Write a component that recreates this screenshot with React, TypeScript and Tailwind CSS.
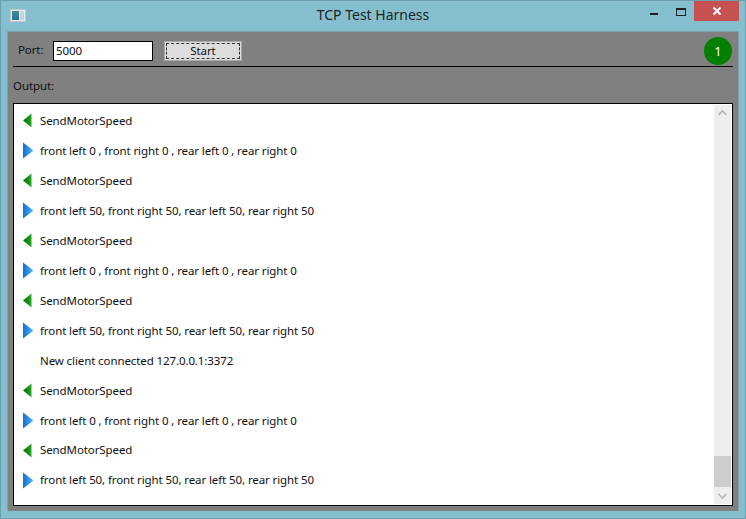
import React from "react";

function LeftArrow() {
  return (
    <svg width="10" height="15" viewBox="0 0 10 15" className="shrink-0">
      <defs>
        <linearGradient id="gl" x1="0" y1="0" x2="1" y2="0">
          <stop offset="0" stopColor="#0a6f0a" />
          <stop offset="0.6" stopColor="#0f8f0f" />
          <stop offset="1" stopColor="#2ba82b" />
        </linearGradient>
      </defs>
      <path d="M8.5 0.5 L8.5 14.5 L0 7.5 Z" fill="url(#gl)" />
    </svg>
  );
}

function RightArrow() {
  return (
    <svg width="11" height="17" viewBox="0 0 11 17" className="shrink-0">
      <defs>
        <linearGradient id="gr" x1="0" y1="0" x2="1" y2="0">
          <stop offset="0" stopColor="#1a6fd0" />
          <stop offset="0.6" stopColor="#2f9bee" />
          <stop offset="1" stopColor="#6cc0f5" />
        </linearGradient>
      </defs>
      <path d="M0 0.5 L10.5 8.5 L0 16.5 Z" fill="url(#gr)" />
    </svg>
  );
}

type Kind = "in" | "out" | "none";
const rows: [Kind, string, string][] = [
  ["in", "SendMotorSpeed", "h-[30px]"],
  ["out", "front left 0 , front right 0 , rear left 0 , rear right 0", "h-[30px]"],
  ["in", "SendMotorSpeed", "h-[30px]"],
  ["out", "front left 50, front right 50, rear left 50, rear right 50", "h-[30px]"],
  ["in", "SendMotorSpeed", "h-[30px]"],
  ["out", "front left 0 , front right 0 , rear left 0 , rear right 0", "h-[30px]"],
  ["in", "SendMotorSpeed", "h-[30px]"],
  ["out", "front left 50, front right 50, rear left 50, rear right 50", "h-[30px]"],
  ["none", "New client connected 127.0.0.1:3372", "h-[30px]"],
  ["in", "SendMotorSpeed", "h-[30px]"],
  ["out", "front left 0 , front right 0 , rear left 0 , rear right 0", "h-[29.5px]"],
  ["in", "SendMotorSpeed", "h-[30px]"],
  ["out", "front left 50, front right 50, rear left 50, rear right 50", "h-[30px]"],
];

export default function App() {
  return (
    <div className="w-[746px] h-[519px] flex flex-col bg-[#85bfcf] border border-[#6d9fae] overflow-hidden text-[11.5px] tracking-[-0.1px] text-[#111] font-['Noto_Sans','Open_Sans',sans-serif]">
      <div className="h-[30px] shrink-0 flex items-start relative">
        <div className="ml-[9px] mt-[8px] w-[16px] h-[13px] bg-[#e8eef0] border border-[#b9c7cc] flex p-[1px] gap-[1px]">
          <div className="w-[7px] bg-gradient-to-b from-[#3d8f8f] to-[#2f6f9f]" />
          <div className="w-[4px] bg-[#c4d4da]" />
        </div>
        <div className="absolute left-0 right-0 top-[4px] text-center text-[14px] tracking-normal leading-[20px] text-[#222]">
          TCP Test Harness
        </div>
        <div className="ml-auto flex items-start">
          <div className="w-[8px] h-[2px] bg-[#222] mt-[12px] mr-[18px]" />
          <div className="w-[10px] h-[8px] border border-[#222] border-t-2 mt-[7px] mr-[8px]" />
          <div className="w-[45px] h-[20px] bg-[#c75050] flex items-center justify-center mr-[6px]">
            <svg width="10" height="10" viewBox="0 0 10 10">
              <path d="M1.5 1.5 L8.5 8.5 M8.5 1.5 L1.5 8.5" stroke="#fff" strokeWidth="2" />
            </svg>
          </div>
        </div>
      </div>
      <div className="mx-[6px] h-[480px] bg-[#808080] border-t border-l border-r border-[#7ba3af] flex flex-col px-[5px]">
        <div className="h-[35px] shrink-0 border-b border-black flex items-start relative">
          <span className="ml-[5px] mt-[9px] w-[35px] leading-[18px]">Port:</span>
          <div className="mt-[9px] w-[100px] h-[20px] bg-white border border-black pl-[2px] flex items-center leading-none">5000</div>
          <div className="ml-[11px] mt-[9px] w-[78px] h-[20px] bg-[#dddddd] border border-[#a8a8a8] p-[1px]">
            <div className="w-full h-full border border-dashed border-[#333] flex items-center justify-center leading-none">Start</div>
          </div>
          <div className="ml-auto mr-[1px] mt-[5px] w-[28px] h-[28px] rounded-full bg-[#008000] text-white text-[13px] pt-[1px] flex items-center justify-center">1</div>
        </div>
        <div className="h-[36px] shrink-0 flex items-center pt-[1px] leading-none">Output:</div>
        <div className="w-[720px] h-[403px] bg-white border border-black flex">
          <div className="flex-1 pt-[1.5px]">
            {rows.map(([kind, text, h], i) => (
              <div key={i} className={`${h} flex items-center`}>
                <div className="w-[26px] pl-[9px] flex items-center justify-start">
                  {kind === "in" && <LeftArrow />}
                  {kind === "out" && <RightArrow />}
                </div>
                <span className="whitespace-nowrap">{text}</span>
              </div>
            ))}
          </div>
          <div className="w-[17px] mr-[1px] my-[1px] bg-[#eeeeee] flex flex-col items-center justify-between relative">
            <svg width="17" height="17" viewBox="0 0 17 17">
              <path d="M4.5 10 L8.5 6 L12.5 10" fill="none" stroke="#b5b5b5" strokeWidth="1.6" />
            </svg>
            <div className="absolute left-0 right-0 bottom-[17px] h-[31px] bg-[#cdcdcd]" />
            <svg width="17" height="17" viewBox="0 0 17 17">
              <path d="M4.5 7 L8.5 11 L12.5 7" fill="none" stroke="#b5b5b5" strokeWidth="1.6" />
            </svg>
          </div>
        </div>
      </div>
    </div>
  );
}
